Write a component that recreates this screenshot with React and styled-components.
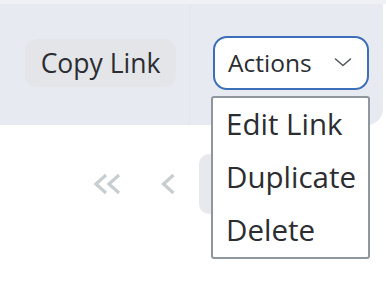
import React from "react";
import styled, { createGlobalStyle } from "styled-components";

const Global = createGlobalStyle`
  html, body { margin: 0; padding: 0; background: #ffffff; }
  body { font-family: "Open Sans", "Noto Sans", sans-serif; color: #2b2d31; }
`;

const Page = styled.div`
  width: 386px;
  height: 288px;
  overflow: hidden;
  position: relative;
`;

const TopStrip = styled.div`
  height: 4px;
  background: #f0f1f4;
`;

const Panel = styled.div`
  height: 121px;
  margin-right: 3px;
  background: #e8eaf2;
  border-bottom-right-radius: 16px;
  display: flex;
`;

const Cell = styled.div`
  display: flex;
  align-items: flex-start;
  box-sizing: border-box;
  height: 100%;
  justify-content: ${(p) => (p.$end ? "flex-end" : "flex-start")};
  width: ${(p) => (p.$width ? `${p.$width}px` : "auto")};
  flex: ${(p) => (p.$width ? "none" : "1")};
  padding-top: ${(p) => p.$top}px;
  padding-left: ${(p) => p.$left || 0}px;
  padding-right: ${(p) => p.$right || 0}px;
  border-right: ${(p) => (p.$divider ? "1px solid #e4e6ee" : "none")};
`;

const CopyButton = styled.button`
  width: 151px;
  height: 48px;
  border: none;
  border-radius: 12px;
  background: #e4e5e9;
  font-family: "Open Sans", sans-serif;
  font-size: 26.5px;
  color: #2b2d31;
  padding: 0;
  cursor: pointer;
`;

const SelectWrap = styled.div`
  position: relative;
`;

const Select = styled.div`
  box-sizing: border-box;
  width: 156px;
  height: 54px;
  border: 2px solid #3b70b8;
  border-radius: 14px;
  background: #ffffff;
  display: flex;
  align-items: center;
  justify-content: space-between;
  padding: 0 15px 2px 13px;
  font-size: 24.5px;
  color: #2b2d31;
`;

const Menu = styled.ul`
  position: absolute;
  left: -2px;
  top: 60px;
  box-sizing: border-box;
  width: 159px;
  margin: 0;
  padding: 0;
  list-style: none;
  background: #ffffff;
  border: 2px solid #8f979e;
  border-radius: 3px;
  z-index: 2;
`;

const MenuItem = styled.li`
  height: 53px;
  line-height: 51px;
  font-size: 29.5px;
  padding-left: 13px;
  color: #2b2d31;
  white-space: nowrap;
`;

const Pager = styled.div`
  display: flex;
  gap: 1px;
  margin-top: 29px;
  padding-left: 77px;
`;

const PageButton = styled.div`
  width: 60px;
  height: 60px;
  border-radius: 10px;
  display: flex;
  align-items: center;
  justify-content: center;
  background: ${(p) => (p.$active ? "#e8e9ec" : "transparent")};
`;

const Chevron = () => (
  <svg width="18" height="10" viewBox="0 0 18 10" fill="none">
    <polyline points="1.5,2 9,8.5 16.5,2" stroke="#555a60" strokeWidth="1.6" strokeLinecap="round" strokeLinejoin="round" />
  </svg>
);

const DoubleLeft = () => (
  <svg width="28" height="22" viewBox="0 0 28 22" fill="none">
    <polyline points="13,2 3,11 13,20" stroke="#c8cdd0" strokeWidth="3.2" strokeLinejoin="miter" />
    <polyline points="26,2 16,11 26,20" stroke="#c8cdd0" strokeWidth="3.2" strokeLinejoin="miter" />
  </svg>
);

const SingleLeft = () => (
  <svg width="14" height="22" viewBox="0 0 14 22" fill="none">
    <polyline points="12.5,2 2.5,11 12.5,20" stroke="#c8cdd0" strokeWidth="3.2" strokeLinejoin="miter" />
  </svg>
);

export default function App() {
  return (
    <Page>
      <Global />
      <TopStrip />
      <Panel>
        <Cell $width={190} $end $top={35} $right={13} $divider>
          <CopyButton>Copy Link</CopyButton>
        </Cell>
        <Cell $top={32} $left={23}>
          <SelectWrap>
            <Select>
              <span>Actions</span>
              <Chevron />
            </Select>
            <Menu>
              <MenuItem>Edit Link</MenuItem>
              <MenuItem>Duplicate</MenuItem>
              <MenuItem>Delete</MenuItem>
            </Menu>
          </SelectWrap>
        </Cell>
      </Panel>
      <Pager>
        <PageButton><DoubleLeft /></PageButton>
        <PageButton><SingleLeft /></PageButton>
        <PageButton $active />
      </Pager>
    </Page>
  );
}
